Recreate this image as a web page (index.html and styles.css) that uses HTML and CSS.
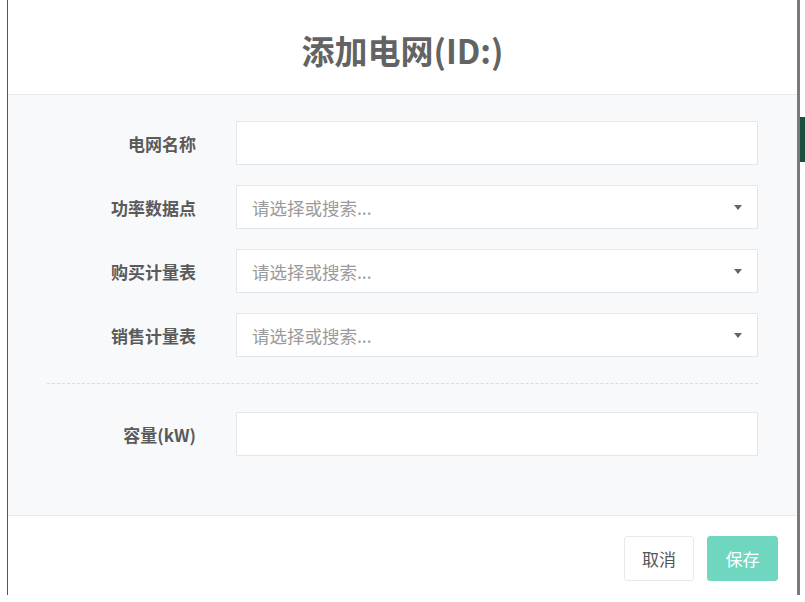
FILE: index.html
```html
<!DOCTYPE html>
<html lang="zh-CN">
<head>
<meta charset="utf-8">
<title>添加电网</title>
<link rel="stylesheet" href="styles.css">
</head>
<body>
<div class="page">
  <div class="bg-tab"></div>
  <div class="modal">
    <div class="modal-header">
      <h4 class="modal-title">添加电网(ID:)</h4>
    </div>
    <div class="modal-body">
      <div class="form-row">
        <label class="form-label">电网名称</label>
        <div class="control"></div>
      </div>
      <div class="form-row">
        <label class="form-label">功率数据点</label>
        <div class="control select"><span class="placeholder">请选择或搜索...</span><span class="caret"></span></div>
      </div>
      <div class="form-row">
        <label class="form-label">购买计量表</label>
        <div class="control select"><span class="placeholder">请选择或搜索...</span><span class="caret"></span></div>
      </div>
      <div class="form-row">
        <label class="form-label">销售计量表</label>
        <div class="control select"><span class="placeholder">请选择或搜索...</span><span class="caret"></span></div>
      </div>
      <div class="divider"></div>
      <div class="form-row">
        <label class="form-label">容量(kW)</label>
        <div class="control"></div>
      </div>
    </div>
    <div class="modal-footer">
      <button class="btn btn-white">取消</button>
      <button class="btn btn-primary">保存</button>
    </div>
  </div>
</div>
</body>
</html>
```

FILE: styles.css
```css
html, body {
  margin: 0;
  padding: 0;
  background: #ffffff;
}

body {
  font-family: "Noto Sans CJK SC", "Liberation Sans", sans-serif;
  color: #555555;
}

.page {
  position: relative;
  width: 805px;
  height: 602px;
  overflow: hidden;
}

.bg-tab {
  position: absolute;
  left: 800px;
  top: 117px;
  width: 5px;
  height: 45px;
  background: #1d4f3e;
}

.modal {
  position: relative;
  margin-left: 7px;
  width: 789px;
  height: 595px;
  background: #ffffff;
  border-left: 1px solid #555555;
  border-right: 3px solid #7a7a7a;
  display: flex;
  flex-direction: column;
}

.modal-header {
  height: 94px;
  border-bottom: 1px solid #e9e9e9;
  display: flex;
  align-items: center;
  justify-content: center;
}

.modal-title {
  margin: 6px 0 0 0;
  font-size: 33px;
  font-weight: 700;
  color: #636363;
  line-height: 1;
}

.modal-body {
  background: #f8f9fa;
  padding: 26px 39px 0 39px;
  height: 394px;
  border-bottom: 1px solid #e9e9e9;
  display: flex;
  flex-direction: column;
}

.form-row {
  display: grid;
  grid-template-columns: 149px 1fr;
  column-gap: 40px;
  align-items: center;
  margin-bottom: 20px;
}

.form-label {
  text-align: right;
  font-size: 17px;
  font-weight: 700;
  color: #5a5a5a;
}

.control {
  height: 42px;
  background: #ffffff;
  border: 1px solid #e5e6e7;
  display: flex;
  align-items: center;
  padding: 0 15px 0 15px;
}

.select {
  justify-content: space-between;
}

.placeholder {
  font-size: 17.5px;
  color: #9a9a9a;
}

.caret {
  width: 0;
  height: 0;
  border-left: 4px solid transparent;
  border-right: 4px solid transparent;
  border-top: 5px solid #666666;
  margin-right: 0;
}

.divider {
  border-top: 1px dashed #dcdcdc;
  margin: 6px 0 28px 0;
}

.modal-footer {
  flex: 1;
  display: flex;
  justify-content: flex-end;
  align-items: flex-start;
  gap: 13px;
  padding: 20px 19px 0 0;
}

.btn {
  height: 45px;
  padding: 0 14px;
  font-family: "Noto Sans CJK SC", "Liberation Sans", sans-serif;
  font-size: 17px;
  border-radius: 3px;
  cursor: pointer;
}

.btn-white {
  width: 70px;
  background: #ffffff;
  border: 1px solid #e7eaec;
  color: #555555;
}

.btn-primary {
  width: 71px;
  background: #6fd6c0;
  border: 1px solid #6fd6c0;
  color: #ffffff;
}
```
